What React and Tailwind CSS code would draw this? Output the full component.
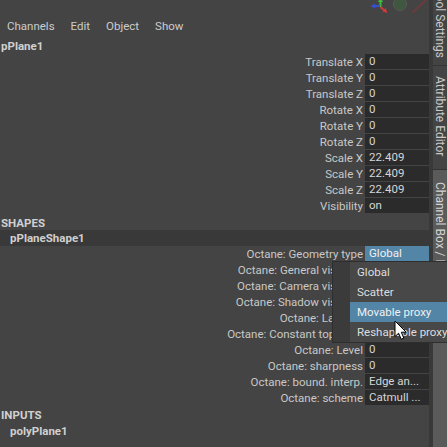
import React from 'react';

const transformRows = [
  ['Translate X', '0'],
  ['Translate Y', '0'],
  ['Translate Z', '0'],
  ['Rotate X', '0'],
  ['Rotate Y', '0'],
  ['Rotate Z', '0'],
  ['Scale X', '22.409'],
  ['Scale Y', '22.409'],
  ['Scale Z', '22.409'],
  ['Visibility', 'on'],
];

const octaneRows = [
  ['Octane: Geometry type', 'Global', true],
  ['Octane: General visibility', 'on'],
  ['Octane: Camera visibility', 'on'],
  ['Octane: Shadow visibility', 'on'],
  ['Octane: Layer ID', '1'],
  ['Octane: Constant topology', 'off'],
  ['Octane: Level', '0'],
  ['Octane: sharpness', '0'],
  ['Octane: bound. interp.', 'Edge an...'],
  ['Octane: scheme', 'Catmull ...'],
];

const menuItems = ['Global', 'Scatter', 'Movable proxy', 'Reshapable proxy'];

const Row = ({ label, value, active }) => (
  <div className="h-4 flex">
    <div className="flex-1 text-right pr-[2px] leading-4 whitespace-nowrap overflow-hidden">{label}</div>
    <div
      className={
        active
          ? 'w-[64px] h-[15px] pl-[4px] leading-[15px] whitespace-nowrap bg-[#5285a6] text-[#f0f0f0]'
          : 'w-[64px] h-[15px] pl-[4px] leading-[15px] whitespace-nowrap bg-[#2b2b2b] text-[#d6d6d6]'
      }
    >
      {value}
    </div>
  </div>
);

const ToolbarIcons = () => (
  <svg width="61" height="18" viewBox="0 0 61 18">
    {/* axis gizmo */}
    <line x1="12.5" y1="7" x2="12.5" y2="1" stroke="#3fb83f" strokeWidth="2" />
    <polygon points="10,2 15,2 12.5,-3" fill="#3fb83f" />
    <line x1="12" y1="6" x2="6" y2="6" stroke="#3a4fd0" strokeWidth="2" />
    <polygon points="2.5,6 7,3.5 7,8.5" fill="#3a4fd0" />
    <line x1="12.5" y1="7" x2="16.5" y2="10.5" stroke="#d03a3a" strokeWidth="2" />
    <polygon points="19.5,13 14.5,11.5 17.5,8" fill="#d03a3a" />
    {/* isolate circle */}
    <circle cx="32" cy="4" r="6.5" fill="#3e573e" stroke="#595959" strokeWidth="1" />
    {/* slash */}
    <line x1="59" y1="-1" x2="45" y2="12" stroke="#6b3c3c" strokeWidth="2" strokeLinecap="round" />
  </svg>
);

const Cursor = () => (
  <svg width="14" height="21" viewBox="0 0 14 21">
    <path
      d="M1 1 L1 16.5 L4.6 13.2 L7.2 19.2 L9.8 18.1 L7.3 12.2 L12.2 12.2 Z"
      fill="#ffffff"
      stroke="#000000"
      strokeWidth="1"
      strokeLinejoin="round"
    />
  </svg>
);

export default function App() {
  return (
    <div className="relative w-[447px] h-[447px] overflow-hidden flex bg-[#444444] text-[#c8c8c8] text-[11.5px] font-[Roboto,'Liberation_Sans',sans-serif]">
      {/* channel box main column */}
      <div className="w-[429px] flex flex-col">
        <div className="h-[18px] flex justify-end">
          <ToolbarIcons />
        </div>

        <div className="h-[18px] flex items-center gap-4 pl-[7px] text-[#cccccc]">
          <span>Channels</span>
          <span>Edit</span>
          <span>Object</span>
          <span>Show</span>
        </div>

        <div className="h-[18px] pt-[2px] pl-px leading-4 font-bold text-[#d0d0d0]">pPlane1</div>

        <div className="flex flex-col">
          {transformRows.map(([label, value]) => (
            <Row key={label} label={label} value={value} />
          ))}
        </div>

        <div className="h-4 pt-px pl-px leading-4 font-bold text-[#d0d0d0]">SHAPES</div>
        <div className="h-4 pl-[10px] leading-4 font-bold text-[#d0d0d0] bg-[#393939]">pPlaneShape1</div>

        <div className="flex flex-col">
          {octaneRows.map(([label, value, active]) => (
            <Row key={label} label={label} value={value} active={active} />
          ))}
        </div>

        <div className="h-[17px] pt-px pl-px leading-4 font-bold text-[#d0d0d0]">INPUTS</div>
        <div className="h-4 pl-[10px] leading-4 font-bold text-[#d0d0d0]">polyPlane1</div>
      </div>

      <div className="w-[4px] bg-[#393939]" />

      {/* side tabs */}
      <div className="flex-1 flex flex-col mt-[-20px] text-[12px]">
        <div className="h-[86px] pt-[8px] flex justify-center border-b border-[#333333]">
          <span className="[writing-mode:vertical-rl] whitespace-nowrap leading-[14px]">Tool Settings</span>
        </div>
        <div className="h-[104px] pt-[10px] flex justify-center border-b border-[#333333]">
          <span className="[writing-mode:vertical-rl] whitespace-nowrap leading-[14px]">Attribute Editor</span>
        </div>
        <div className="flex-1 pt-[12px] flex justify-center bg-[#5a5a5a] text-[#d4d4d4]">
          <span className="[writing-mode:vertical-rl] whitespace-nowrap leading-[14px]">Channel Box / Layer Editor</span>
        </div>
      </div>

      {/* open dropdown for Geometry type */}
      <div className="absolute left-[332px] top-[261px] w-[130px] flex border border-[#2e2e2e] bg-[#484848] text-[11.5px] text-[#dedede]">
        <div className="w-[17px] bg-[#3b3b3b]" />
        <div className="flex-1 flex flex-col">
          {menuItems.map((item) => (
            <div
              key={item}
              className={
                item === 'Movable proxy'
                  ? 'h-5 pl-[7px] leading-5 whitespace-nowrap bg-[#5285a6] text-[#f0f0f0]'
                  : 'h-5 pl-[7px] leading-5 whitespace-nowrap'
              }
            >
              {item}
            </div>
          ))}
        </div>
      </div>

      <div className="absolute left-[394px] top-[320px]">
        <Cursor />
      </div>
    </div>
  );
}
